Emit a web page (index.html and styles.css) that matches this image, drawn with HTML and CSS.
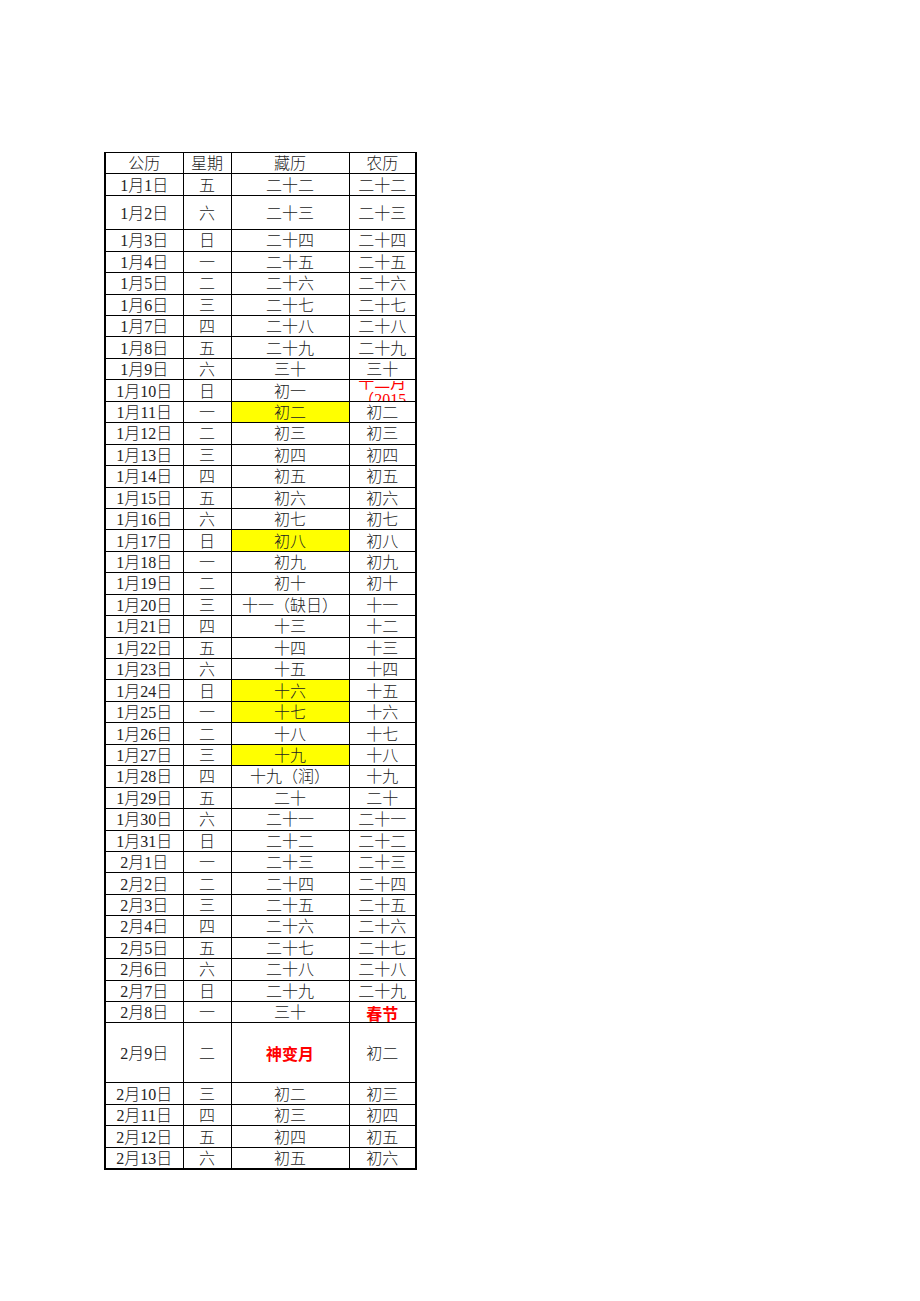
FILE: index.html
```html
<!DOCTYPE html>
<html lang="zh">
<head>
<meta charset="utf-8">
<link rel="stylesheet" href="styles.css">
</head>
<body>
<table class="cal">
<colgroup><col class="c1"><col class="c2"><col class="c3"><col class="c4"></colgroup>
<tr><td>公历</td><td>星期</td><td>藏历</td><td>农历</td></tr>
<tr><td>1月1日</td><td>五</td><td>二十二</td><td>二十二</td></tr>
<tr class="tall"><td>1月2日</td><td>六</td><td>二十三</td><td>二十三</td></tr>
<tr><td>1月3日</td><td>日</td><td>二十四</td><td>二十四</td></tr>
<tr><td>1月4日</td><td>一</td><td>二十五</td><td>二十五</td></tr>
<tr><td>1月5日</td><td>二</td><td>二十六</td><td>二十六</td></tr>
<tr><td>1月6日</td><td>三</td><td>二十七</td><td>二十七</td></tr>
<tr><td>1月7日</td><td>四</td><td>二十八</td><td>二十八</td></tr>
<tr><td>1月8日</td><td>五</td><td>二十九</td><td>二十九</td></tr>
<tr><td>1月9日</td><td>六</td><td>三十</td><td>三十</td></tr>
<tr><td>1月10日</td><td>日</td><td>初一</td><td class="clipcell"><div class="clip">十二月<br>（2015</div></td></tr>
<tr><td>1月11日</td><td>一</td><td class="hl">初二</td><td>初二</td></tr>
<tr><td>1月12日</td><td>二</td><td>初三</td><td>初三</td></tr>
<tr><td>1月13日</td><td>三</td><td>初四</td><td>初四</td></tr>
<tr><td>1月14日</td><td>四</td><td>初五</td><td>初五</td></tr>
<tr><td>1月15日</td><td>五</td><td>初六</td><td>初六</td></tr>
<tr><td>1月16日</td><td>六</td><td>初七</td><td>初七</td></tr>
<tr><td>1月17日</td><td>日</td><td class="hl">初八</td><td>初八</td></tr>
<tr><td>1月18日</td><td>一</td><td>初九</td><td>初九</td></tr>
<tr><td>1月19日</td><td>二</td><td>初十</td><td>初十</td></tr>
<tr><td>1月20日</td><td>三</td><td>十一（缺日）</td><td>十一</td></tr>
<tr><td>1月21日</td><td>四</td><td>十三</td><td>十二</td></tr>
<tr><td>1月22日</td><td>五</td><td>十四</td><td>十三</td></tr>
<tr><td>1月23日</td><td>六</td><td>十五</td><td>十四</td></tr>
<tr><td>1月24日</td><td>日</td><td class="hl">十六</td><td>十五</td></tr>
<tr><td>1月25日</td><td>一</td><td class="hl">十七</td><td>十六</td></tr>
<tr><td>1月26日</td><td>二</td><td>十八</td><td>十七</td></tr>
<tr><td>1月27日</td><td>三</td><td class="hl">十九</td><td>十八</td></tr>
<tr><td>1月28日</td><td>四</td><td>十九（润）</td><td>十九</td></tr>
<tr><td>1月29日</td><td>五</td><td>二十</td><td>二十</td></tr>
<tr><td>1月30日</td><td>六</td><td>二十一</td><td>二十一</td></tr>
<tr><td>1月31日</td><td>日</td><td>二十二</td><td>二十二</td></tr>
<tr><td>2月1日</td><td>一</td><td>二十三</td><td>二十三</td></tr>
<tr><td>2月2日</td><td>二</td><td>二十四</td><td>二十四</td></tr>
<tr><td>2月3日</td><td>三</td><td>二十五</td><td>二十五</td></tr>
<tr><td>2月4日</td><td>四</td><td>二十六</td><td>二十六</td></tr>
<tr><td>2月5日</td><td>五</td><td>二十七</td><td>二十七</td></tr>
<tr><td>2月6日</td><td>六</td><td>二十八</td><td>二十八</td></tr>
<tr><td>2月7日</td><td>日</td><td>二十九</td><td>二十九</td></tr>
<tr><td>2月8日</td><td>一</td><td>三十</td><td class="red">春节</td></tr>
<tr class="taller"><td>2月9日</td><td>二</td><td class="red">神变月</td><td>初二</td></tr>
<tr><td>2月10日</td><td>三</td><td>初二</td><td>初三</td></tr>
<tr><td>2月11日</td><td>四</td><td>初三</td><td>初四</td></tr>
<tr><td>2月12日</td><td>五</td><td>初四</td><td>初五</td></tr>
<tr><td>2月13日</td><td>六</td><td>初五</td><td>初六</td></tr>
</table>
</body>
</html>
```
FILE: styles.css
```css
html, body {
  margin: 0;
  padding: 0;
  background: #fff;
}
.cal {
  margin: 152px 0 0 104px;
  border-collapse: collapse;
  table-layout: fixed;
  width: 312px;
  border: 2px solid #000;
  border-top-width: 1px;
  font-family: "Liberation Serif", "Noto Sans CJK SC", serif;
  font-size: 16px;
  font-weight: 300;
  color: #222;
}
.c1 { width: 78px; }
.c2 { width: 48px; }
.c3 { width: 118px; }
.c4 { width: 67px; }
.cal tr { height: 21.44px; }
.cal tr.tall { height: 34.4px; }
.cal tr.taller { height: 60px; }
.cal td {
  border-top: 1px solid #000;
  border-bottom: 1px solid #000;
  border-left: 1px solid #000;
  border-right: 1px solid #000;
  padding: 1px 0 0;
  text-align: center;
  vertical-align: middle;
  line-height: 19px;
  white-space: nowrap;
  overflow: hidden;
}
.cal td.hl { background: #ffff00; }
.cal td.red {
  color: #ff0000;
  font-weight: 700;
  font-family: "Noto Sans CJK SC", sans-serif;
  line-height: 18px;
}
.cal td.clipcell { padding: 0; }
.clip {
  height: 20px;
  overflow: hidden;
  display: flex;
  flex-direction: column;
  justify-content: center;
  color: #ff0000;
  font-weight: 400;
  line-height: 17px;
}
```
